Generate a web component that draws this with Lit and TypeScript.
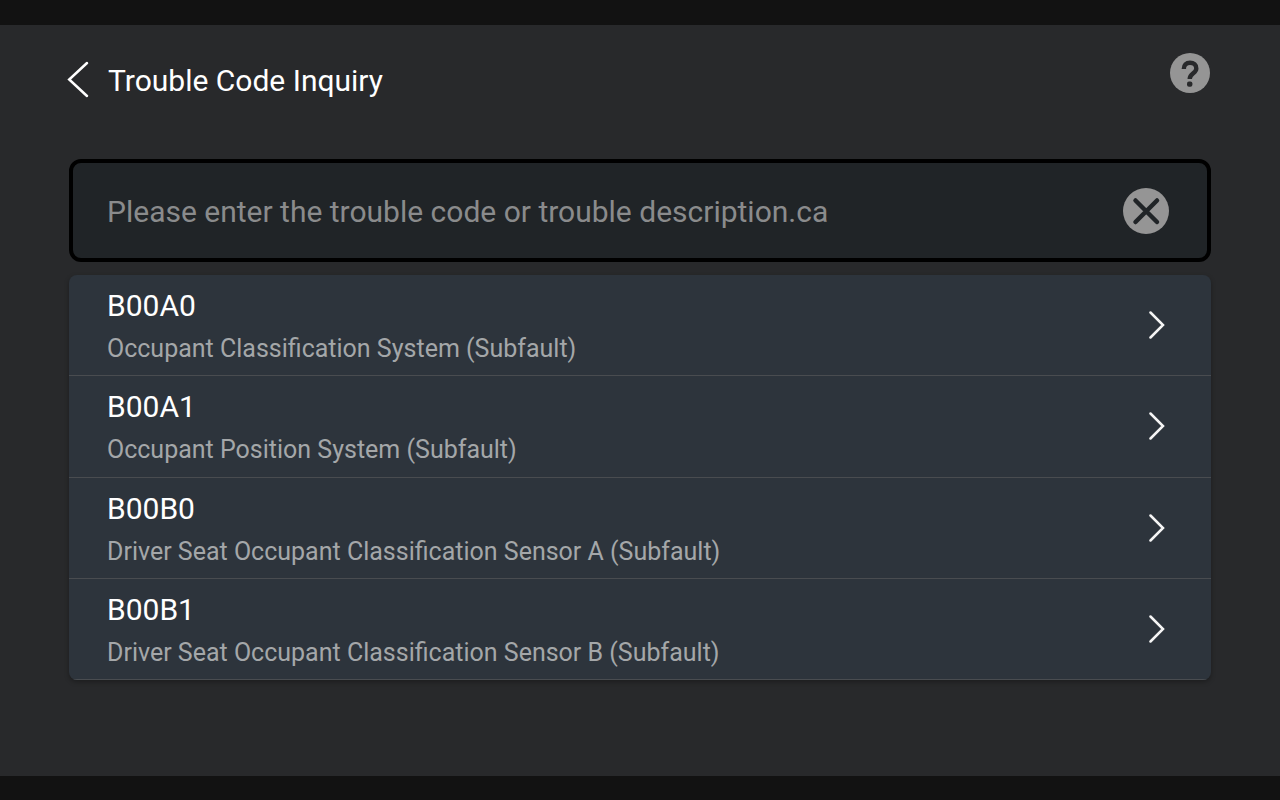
import { LitElement, html, css } from "lit";
import { customElement, state } from "lit/decorators.js";

interface TroubleCode {
  code: string;
  description: string;
}

const CODES: TroubleCode[] = [
  { code: "B00A0", description: "Occupant Classification System (Subfault)" },
  { code: "B00A1", description: "Occupant Position System (Subfault)" },
  { code: "B00B0", description: "Driver Seat Occupant Classification Sensor A (Subfault)" },
  { code: "B00B1", description: "Driver Seat Occupant Classification Sensor B (Subfault)" },
];

@customElement("app-root")
export class AppRoot extends LitElement {
  static styles = css`
    :host {
      display: flex;
      flex-direction: column;
      box-sizing: border-box;
      min-height: 100vh;
      border-top: 25px solid #121212;
      border-bottom: 24px solid #121212;
      background: #28292b;
      padding: 28px 69px;
      font-family: Roboto, sans-serif;
      color: #fff;
    }
    button {
      appearance: none;
      border: 0;
      margin: 0;
      padding: 0;
      background: none;
      color: inherit;
      font: inherit;
      cursor: pointer;
    }
    svg {
      display: block;
    }
    header {
      display: flex;
      align-items: flex-start;
      justify-content: space-between;
      height: 106px;
    }
    .title {
      display: flex;
      align-items: flex-start;
      gap: 19px;
      padding-top: 8px;
    }
    h1 {
      margin: 0;
      font-size: 30px;
      line-height: 40px;
      font-weight: 400;
    }
    .search {
      display: flex;
      align-items: center;
      border: 4px solid #000;
      border-radius: 12px;
      background: #202427;
      padding: 0 38px 0 34px;
      margin-bottom: 13px;
    }
    .search input {
      flex: 1;
      min-width: 0;
      border: 0;
      outline: 0;
      padding: 28px 0 26px;
      background: none;
      color: #fff;
      font: 400 30px/41px Roboto, sans-serif;
      height: 41px;
    }
    .search input::placeholder {
      color: #8a8b8c;
      opacity: 1;
    }
    ul {
      display: grid;
      grid-auto-rows: 1fr;
      min-height: 405px;
      list-style: none;
      margin: 0;
      padding: 0;
      border-radius: 8px;
      overflow: hidden;
      background: #2d343c;
      box-shadow: 0 2px 5px rgba(0, 0, 0, 0.3);
    }
    li {
      display: flex;
      border-bottom: 1px solid #494c50;
    }
    .row {
      flex: 1;
      display: flex;
      align-items: center;
      justify-content: space-between;
      padding: 0 46px 0 38px;
      text-align: left;
    }
    .text {
      padding: 10px 0 4px;
    }
    .code,
    .description {
      display: block;
    }
    .code {
      font-size: 30px;
      line-height: 42px;
    }
    .description {
      font-size: 25px;
      line-height: 44px;
      color: #a4a7a9;
    }
  `;

  @state() private query = "";

  render() {
    return html`
      <header>
        <div class="title">
          <button aria-label="Back">
            <svg width="20" height="38" viewBox="1 0 20 38" fill="none" stroke="#fff" stroke-width="2.5" stroke-linecap="round" overflow="visible">
              <path d="M19 2 1.2 18.5 19 35" />
            </svg>
          </button>
          <h1>Trouble Code Inquiry</h1>
        </div>
        <button aria-label="Help">
          <svg width="42" height="40" viewBox="0 0 42 40" fill="none">
            <circle cx="21" cy="20" r="20" fill="#959595" />
            <path d="M14.8 16c0-4 2.400-6.200 6.200-6.200s6.300 2 6.300 5.600c0 4.900-6.600 4.700-6.600 10.600" stroke="#28292b" stroke-width="4.400" />
            <rect x="18" y="28.400" width="5.400" height="5.400" rx="2" fill="#28292b" />
          </svg>
        </button>
      </header>
      <main>
        <div class="search">
          <input
            type="text"
            aria-label="Trouble code"
            placeholder="Please enter the trouble code or trouble description.ca"
            .value=${this.query}
            @input=${(e: Event) => (this.query = (e.target as HTMLInputElement).value)}
          />
          <button aria-label="Clear" @click=${() => (this.query = "")}>
            <svg width="46" height="46" viewBox="0 0 46 46" fill="none">
              <circle cx="23" cy="23" r="23" fill="#959595" />
              <path d="M12.500 12.500 34 34M34 12.500 12.500 34" stroke="#202427" stroke-width="4.500" stroke-linecap="round" />
            </svg>
          </button>
        </div>
        <ul>
          ${CODES.map(
            (item) => html`
              <li>
                <button class="row">
                  <span class="text">
                    <span class="code">${item.code}</span>
                    <span class="description">${item.description}</span>
                  </span>
                  <svg width="16" height="28" viewBox="0 0 16 28" fill="none" stroke="#f4f4f4" stroke-width="2.5" stroke-linecap="round">
                    <path d="M1.500 1.500 14 14 1.500 26.500" />
                  </svg>
                </button>
              </li>
            `
          )}
        </ul>
      </main>
    `;
  }
}
